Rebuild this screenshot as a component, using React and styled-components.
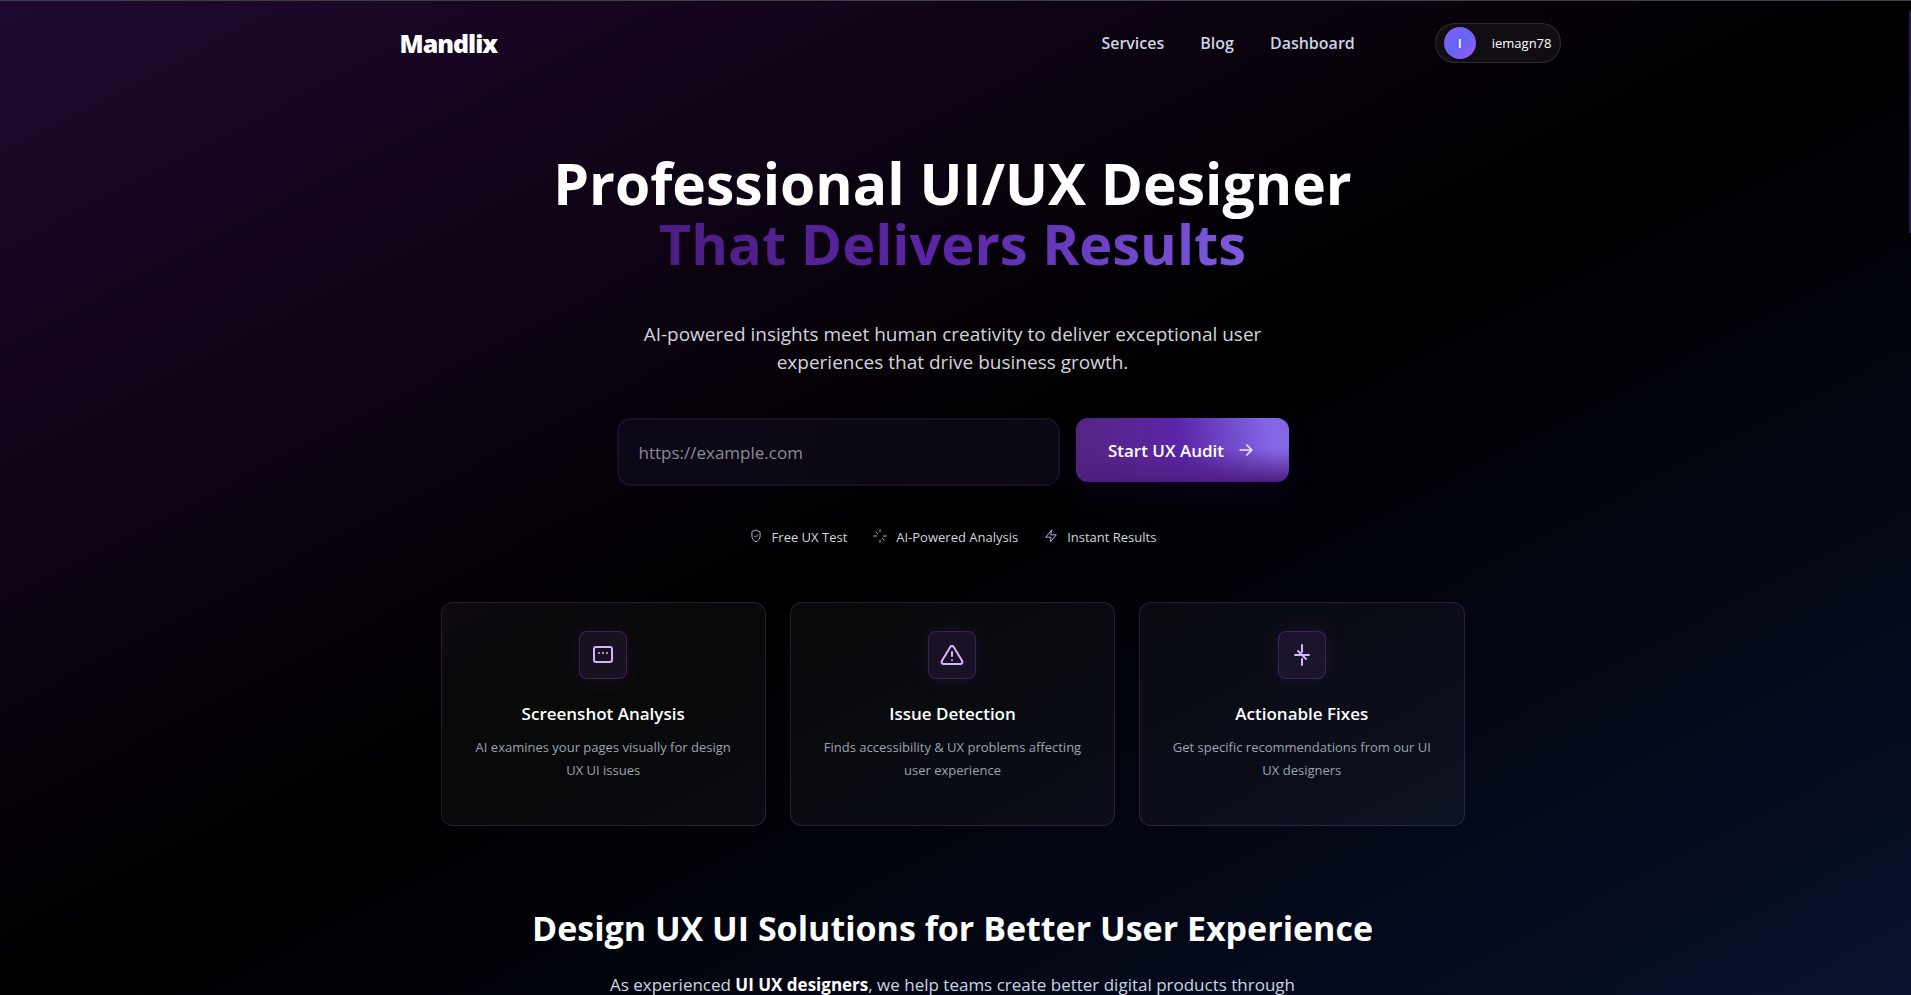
import React from "react";
import styled, { createGlobalStyle } from "styled-components";

const GlobalStyle = createGlobalStyle`
  * {
    box-sizing: border-box;
  }
  html,
  body,
  #root {
    height: 100%;
  }
  body {
    margin: 0;
    background: #000;
    color: #fff;
    font-family: "Open Sans", "Segoe UI", "Noto Sans", sans-serif;
  }
`;

const Page = styled.div`
  display: flex;
  height: 100%;
  overflow: hidden;
  border-top: 1px solid #3f3f46;
  background: linear-gradient(to bottom right, #1f0930 0%, #12041a 22%, #000 50%, #030612 72%, #08122e 100%);
`;

const Content = styled.div`
  flex: 1;
  height: 100%;
  overflow: hidden;
`;

const ScrollTrack = styled.div`
  width: 2px;
  margin-left: 4px;
  padding-top: 10px;
`;

const ScrollThumb = styled.div`
  height: 222px;
  background: #2a1650;
`;

const Header = styled.header`
  display: flex;
  align-items: center;
  max-width: 1280px;
  height: 84px;
  margin: 0 auto;
  padding: 0 32px 0 87px;
`;

const Logo = styled.a`
  margin-right: auto;
  color: #fff;
  font-size: 25px;
  font-weight: 800;
  letter-spacing: -1px;
  text-decoration: none;
`;

const Nav = styled.nav`
  display: flex;
  gap: 36px;
  margin-right: 80px;
`;

const NavLink = styled.a`
  color: #cbd5e1;
  font-size: 16px;
  font-weight: 600;
  text-decoration: none;
`;

const UserButton = styled.button`
  display: flex;
  align-items: center;
  gap: 16px;
  height: 40px;
  padding: 0 8px;
  border: 1px solid rgba(255, 255, 255, 0.12);
  border-radius: 20px;
  background: rgba(255, 255, 255, 0.05);
  color: #fff;
  font: inherit;
  font-size: 13px;
`;

const Avatar = styled.span`
  width: 32px;
  height: 32px;
  border-radius: 50%;
  background: linear-gradient(135deg, #8b5cf6, #6366f1 50%, #a855f7);
  font-weight: 600;
  line-height: 32px;
`;

const Hero = styled.section`
  display: flex;
  flex-direction: column;
  align-items: center;
  max-width: 1024px;
  margin: 0 auto;
  padding-top: 68px;
  text-align: center;
`;

const Title = styled.h1`
  margin: 0;
  font-size: 57px;
  font-weight: 700;
  line-height: 60px;
`;

const TitleAccent = styled.span`
  display: block;
  width: fit-content;
  margin: 0 auto;
  background: linear-gradient(100deg, #4c1d80, #5b26a8 50%, #7c5bdf);
  background-clip: text;
  color: transparent;
  font-size: 56px;
`;

const Lead = styled.p`
  max-width: 660px;
  margin: 47px 0 0;
  color: #d1d5db;
  font-size: 19px;
  line-height: 28px;
`;

const AuditForm = styled.form`
  display: flex;
  align-items: flex-start;
  gap: 16px;
  width: 672px;
  max-width: 100%;
  margin-top: 42px;
`;

const UrlInput = styled.input`
  flex: 1;
  min-width: 0;
  height: 68px;
  padding: 0 20px;
  border: 2px solid rgba(120, 80, 220, 0.1);
  border-radius: 14px;
  background: linear-gradient(100deg, #0d0819, #0b0811 60%);
  color: #fff;
  font: inherit;
  font-size: 17px;

  &::placeholder {
    color: #8b8b93;
    opacity: 1;
  }
`;

const SubmitButton = styled.button`
  display: flex;
  align-items: center;
  justify-content: center;
  gap: 12px;
  width: 213px;
  height: 64px;
  border: 0;
  border-radius: 12px;
  background: linear-gradient(to bottom, transparent 50%, #4f1d80 100%),
    linear-gradient(80deg, #55247f, #5b26a8 50%, #8366e6 90%);
  box-shadow: 0 16px 32px rgba(76, 50, 200, 0.1);
  color: #fff;
  font: inherit;
  font-size: 17px;
  font-weight: 600;
`;

const Perks = styled.ul`
  display: flex;
  gap: 26px;
  margin: 41px 0 0;
  padding: 0;
  color: #d1d5db;
  font-size: 13px;
  line-height: 20px;
  list-style: none;
`;

const Perk = styled.li`
  display: flex;
  align-items: flex-start;
  gap: 9px;

  svg {
    margin-top: 2px;
  }
`;

const Cards = styled.div`
  display: grid;
  grid-template-columns: repeat(3, 1fr);
  gap: 24px;
  width: 100%;
  margin-top: 55px;
`;

const Card = styled.article`
  display: flex;
  flex-direction: column;
  align-items: center;
  padding: 28px 24px 43px;
  border: 1px solid rgba(168, 120, 230, 0.18);
  border-radius: 12px;
  background: rgba(255, 255, 255, 0.035);
`;

const IconBox = styled.div`
  display: grid;
  place-items: center;
  width: 48px;
  height: 48px;
  border: 1px solid rgba(168, 85, 247, 0.25);
  border-radius: 8px;
  background: rgba(168, 85, 247, 0.1);
  box-shadow: 0 0 20px rgba(168, 85, 247, 0.1);
`;

const CardTitle = styled.h3`
  margin: 22px 0 9px;
  font-size: 17px;
  font-weight: 600;
  line-height: 26px;
`;

const CardText = styled.p`
  margin: 0;
  color: #9ca3af;
  font-size: 13px;
  line-height: 23px;
`;

const Solutions = styled.section`
  padding-top: 78px;
  text-align: center;
`;

const SectionTitle = styled.h2`
  margin: 0;
  font-size: 34px;
  font-weight: 700;
  line-height: 48px;
`;

const SectionText = styled.p`
  max-width: 720px;
  margin: 19px auto 0;
  color: #cbd5e1;
  font-size: 17px;
  line-height: 28px;

  strong {
    color: #fff;
  }
`;

const Icon = ({ size, stroke = "#d8b4fe", width = 2, children }) => (
  <svg
    width={size}
    height={size}
    viewBox="0 0 24 24"
    fill="none"
    stroke={stroke}
    strokeWidth={width}
    strokeLinecap="round"
    strokeLinejoin="round"
    aria-hidden="true"
  >
    {children}
  </svg>
);

const perks = [
  {
    label: "Free UX Test",
    icon: (
      <>
        <path d="M12 2l7 3v7c0 5-3 8-7 10-4-2-7-5-7-10V5z" />
        <path d="M9 12l2 2 4-4" />
      </>
    ),
  },
  {
    label: "AI-Powered Analysis",
    icon: <path d="M12 1v4M12 19v4M1 12h5M18 12h5M5 5l3 3M16 16l3 3" />,
  },
  { label: "Instant Results", icon: <path d="M13 2L3 14h9l-1 8 10-12h-9z" /> },
];

const features = [
  {
    title: "Screenshot Analysis",
    text: "AI examines your pages visually for design UX UI issues",
    icon: (
      <>
        <rect x="3" y="4" width="18" height="15" rx="2" />
        <path d="M8 10h.01M12 10h.01M16 10h.01" />
      </>
    ),
  },
  {
    title: "Issue Detection",
    text: "Finds accessibility & UX problems affecting user experience",
    icon: (
      <>
        <path d="M10.3 3.9L1.8 18a2 2 0 0 0 1.7 3h17a2 2 0 0 0 1.7-3L13.7 3.9a2 2 0 0 0-3.4 0z" />
        <path d="M12 9v4M12 17h.01" />
      </>
    ),
  },
  {
    title: "Actionable Fixes",
    text: "Get specific recommendations from our UI UX designers",
    icon: <path d="M12 2v7M12 16v6M5 12h14M8 8l8 8" />,
  },
];

const App = () => {
  return (
    <>
      <GlobalStyle />
      <Page>
        <Content>
          <Header>
            <Logo href="#">Mandlix</Logo>
            <Nav>
              <NavLink href="#services">Services</NavLink>
              <NavLink href="#blog">Blog</NavLink>
              <NavLink href="#dashboard">Dashboard</NavLink>
            </Nav>
            <UserButton type="button">
              <Avatar>I</Avatar>
              iemagn78
            </UserButton>
          </Header>
          <main>
            <Hero>
              <Title>
                Professional UI/UX Designer
                <TitleAccent>That Delivers Results</TitleAccent>
              </Title>
              <Lead>
                AI-powered insights meet human creativity to deliver exceptional user experiences that drive business
                growth.
              </Lead>
              <AuditForm>
                <UrlInput type="url" aria-label="Website URL" placeholder="https://example.com" />
                <SubmitButton type="submit">
                  Start UX Audit
                  <Icon size={20} stroke="#f3e8ff">
                    <path d="M5 12h14M13 6l6 6-6 6" />
                  </Icon>
                </SubmitButton>
              </AuditForm>
              <Perks>
                {perks.map((perk) => (
                  <Perk key={perk.label}>
                    <Icon size={14} width={1.5}>
                      {perk.icon}
                    </Icon>
                    {perk.label}
                  </Perk>
                ))}
              </Perks>
              <Cards>
                {features.map((feature) => (
                  <Card key={feature.title}>
                    <IconBox>
                      <Icon size={24}>{feature.icon}</Icon>
                    </IconBox>
                    <CardTitle>{feature.title}</CardTitle>
                    <CardText>{feature.text}</CardText>
                  </Card>
                ))}
              </Cards>
            </Hero>
            <Solutions>
              <SectionTitle>Design UX UI Solutions for Better User Experience</SectionTitle>
              <SectionText>
                As experienced <strong>UI UX designers</strong>, we help teams create better digital products through
              </SectionText>
            </Solutions>
          </main>
        </Content>
        <ScrollTrack>
          <ScrollThumb />
        </ScrollTrack>
      </Page>
    </>
  );
};

export default App;
